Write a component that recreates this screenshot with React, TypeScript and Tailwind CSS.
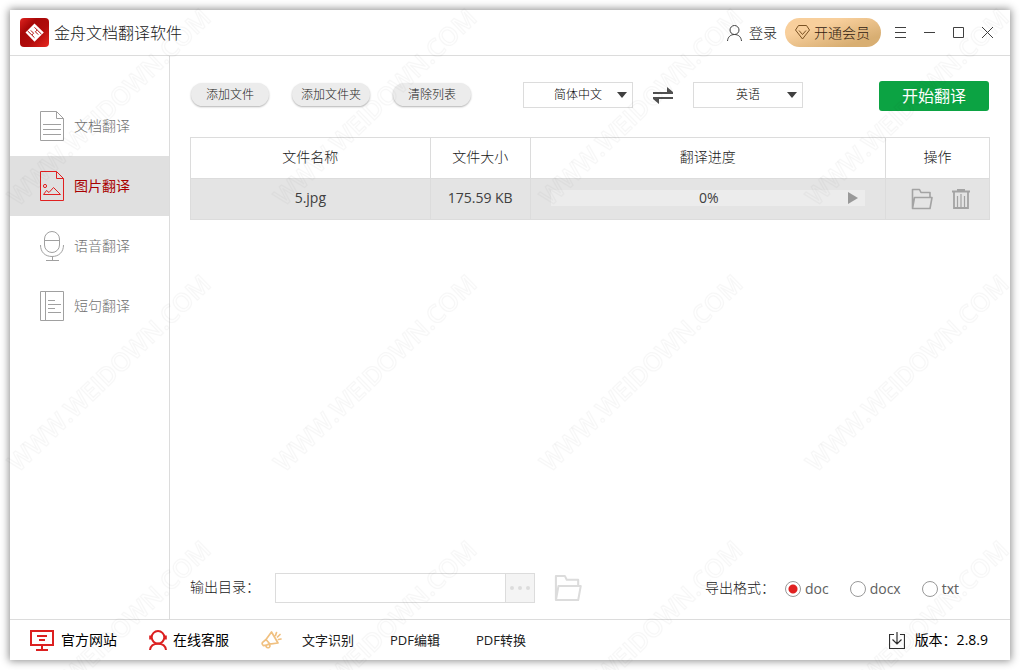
import { useState } from 'react';
import type { ReactNode } from 'react';

function Logo() {
  return (
    <svg width="29" height="29" viewBox="0 0 29 29" aria-hidden="true">
      <defs>
        <linearGradient id="logo-bg" x1="0" y1="0" x2="1" y2="1">
          <stop offset="0" stopColor="#e02420" />
          <stop offset="0.3" stopColor="#a80808" />
          <stop offset="0.6" stopColor="#b00c0c" />
          <stop offset="1" stopColor="#e8281f" />
        </linearGradient>
      </defs>
      <rect width="29" height="29" rx="4" fill="url(#logo-bg)" />
      <path d="M14.5 5.5 23.8 14.5 14.5 23.8 5.5 14.5Z" fill="#fff" />
      <path
        d="M7.5 12.8 11.8 17 13.6 15.2 10.8 12.4M21.5 16.2 17.2 12 15.4 13.8 18.2 16.6M11.8 17 14.5 19.7M17.2 12 14.5 9.3"
        fill="none"
        stroke="#b00c0c"
        strokeWidth="1"
      />
    </svg>
  );
}

function DocIcon() {
  return (
    <svg width="24" height="30" viewBox="0 0 24 30" fill="none" stroke="#a0a0a0" aria-hidden="true">
      <path d="M.5.5H16.5L23.5 7.5V29.5H.5ZM16.5.5V7.5H23.5M3 13.5H21M3 18.5H21M3 23.5H21" />
    </svg>
  );
}

function ImageIcon() {
  return (
    <svg width="24" height="30" viewBox="0 0 24 30" fill="none" stroke="#e02020" aria-hidden="true">
      <path d="M.5.5H16.5L23.5 7.5V29.5H.5ZM16.5.5V7.5H23.5M3.5 23.5 6.5 19.5 9 21.5 13.5 16.5 20.5 23.5Z" />
      <circle cx="5" cy="15" r="1.6" />
    </svg>
  );
}

function MicIcon() {
  return (
    <svg width="24" height="30" viewBox="0 0 24 30" fill="none" stroke="#a0a0a0" aria-hidden="true">
      <rect x="4.5" y=".5" width="15" height="21" rx="7.5" />
      <path d="M4.5 9.5H19.5M.5 14C.5 21 5 25.5 12 25.5S23.5 21 23.5 14M12.5 25.5V29.5M6 29.5H19" />
    </svg>
  );
}

function BookIcon() {
  return (
    <svg width="24" height="30" viewBox="0 0 24 30" fill="none" stroke="#a0a0a0" aria-hidden="true">
      <path d="M.5.5H23.5V29.5H.5ZM5.5.5V29.5M8 9.5H15M8 13.5H21M8 17.5H15M8 21.5H21" />
    </svg>
  );
}

function FolderIcon({ size }: { size: number }) {
  return (
    <svg width={size} height={size} viewBox="0 0 22 22" fill="none" stroke="currentColor" strokeWidth="1.6" strokeLinejoin="round" aria-hidden="true">
      <path d="M1.5 20V1.5H8.5L10 4.5H19V9M1.5 20.5 3.5 9.5H21L19 20.5H1.5V17" />
    </svg>
  );
}

function TrashIcon() {
  return (
    <svg width="18" height="20" viewBox="0 0 18 20" fill="none" stroke="currentColor" aria-hidden="true">
      <path d="M0 2.5H18M2 3V19H16V3" strokeWidth="1.8" />
      <path d="M5 1H13" strokeWidth="2" />
      <path d="M5.5 7V18M9 5V18M12.5 7V18" strokeWidth="1.2" />
    </svg>
  );
}

function Watermark() {
  return (
    <svg className="pointer-events-none absolute inset-0 h-full w-full" aria-hidden="true">
      <defs>
        <pattern id="wm" width="266" height="266" patternUnits="userSpaceOnUse">
          <text
            transform="translate(109 107) rotate(-44)"
            y="9"
            textAnchor="middle"
            fontSize="25"
            fontFamily='"Open Sans", "Noto Sans", sans-serif'
            fontWeight="600"
            fill="none"
            stroke="#000"
            strokeOpacity="0.03"
            strokeWidth="1.2"
          >
            WWW.WEIDOWN.COM
          </text>
        </pattern>
      </defs>
      <rect width="100%" height="100%" fill="url(#wm)" />
    </svg>
  );
}

const navItems: { label: string; icon: ReactNode }[] = [
  { label: '文档翻译', icon: <DocIcon /> },
  { label: '图片翻译', icon: <ImageIcon /> },
  { label: '语音翻译', icon: <MicIcon /> },
  { label: '短句翻译', icon: <BookIcon /> },
];

function LanguageSelect({ label, value, onChange }: { label: string; value: string; onChange: (v: string) => void }) {
  return (
    <div className="relative">
      <select
        aria-label={label}
        value={value}
        onChange={(e) => onChange(e.target.value)}
        className="block h-[26px] w-[110px] appearance-none border border-[#dcdcdc] bg-white px-5 text-center text-xs font-light text-black [text-align-last:center]"
      >
        <option>简体中文</option>
        <option>英语</option>
      </select>
      <svg className="pointer-events-none absolute top-[10px] right-[6px]" width="10" height="6" viewBox="0 0 10 6" aria-hidden="true">
        <path d="M0 0H10L5 6Z" fill="#404040" />
      </svg>
    </div>
  );
}

export default function App() {
  const [active, setActive] = useState('图片翻译');
  const [source, setSource] = useState('简体中文');
  const [target, setTarget] = useState('英语');
  const [format, setFormat] = useState('doc');
  const [outputDir, setOutputDir] = useState('');

  return (
    <div className='relative flex min-h-screen bg-white p-[10px] font-["Open_Sans","Noto_Sans_CJK_SC",sans-serif] text-sm text-[#404040]'>
      <div className="flex flex-1 flex-col bg-white shadow-[0_0_8px_1px_rgba(0,0,0,0.45)]">
        <header className="flex h-[46px] items-center border-b border-[#dcdcdc] pr-[17px] pl-[10px]">
          <Logo />
          <h1 className="ml-[5px] text-base font-light text-[#202020]">金舟文档翻译软件</h1>
          <div className="ml-auto flex items-center">
            <button className="flex items-center gap-[7px] font-light text-[#202020]">
              <svg width="15" height="16" viewBox="0 0 15 16" fill="none" stroke="#404040" aria-hidden="true">
                <circle cx="7.5" cy="5" r="4.5" />
                <path d="M.5 16C.8 12 3.5 9.5 7.5 9.5S14.2 12 14.5 16" />
              </svg>
              登录
            </button>
            <button className="ml-2 flex h-[29px] items-center gap-1 rounded-full bg-linear-to-br from-[#f8cf9c] from-30% to-[#d8ae72] to-80% pr-[11px] pl-[10px] font-light text-[#302010]">
              <svg width="15" height="15" viewBox="0 0 15 15" fill="none" stroke="#7a5223" aria-hidden="true">
                <path d="M3.5.5H11.5L14.5 5 7.5 14 .5 5ZM4 5.5 7.5 9.5 11 5.5" />
              </svg>
              开通会员
            </button>
            <button aria-label="菜单" className="ml-[14px]">
              <svg width="11" height="11" viewBox="0 0 11 11" stroke="#404040" aria-hidden="true"><path d="M0 .5H11M0 5.5H11M0 10.5H11" /></svg>
            </button>
            <button aria-label="最小化" className="ml-[18px]">
              <svg width="11" height="11" viewBox="0 0 11 11" stroke="#404040" aria-hidden="true"><path d="M0 5.5H11" /></svg>
            </button>
            <button aria-label="最大化" className="ml-[18px]">
              <svg width="11" height="11" viewBox="0 0 11 11" fill="none" stroke="#404040" aria-hidden="true"><path d="M.5.5H10.5V10.5H.5Z" /></svg>
            </button>
            <button aria-label="关闭" className="ml-[18px]">
              <svg width="11" height="11" viewBox="0 0 11 11" stroke="#404040" aria-hidden="true"><path d="M0 0 11 11M11 0 0 11" /></svg>
            </button>
          </div>
        </header>

        <div className="flex flex-1">
          <nav className="w-40 shrink-0 border-r border-[#dcdcdc] pt-10">
            {navItems.map((item) => (
              <button
                key={item.label}
                aria-current={active === item.label ? 'page' : undefined}
                onClick={() => setActive(item.label)}
                className={
                  active === item.label
                    ? 'flex h-[60px] w-full items-center gap-[10px] bg-[#e0e0e0] pl-[30px] text-[#a80000]'
                    : 'flex h-[60px] w-full items-center gap-[10px] pl-[30px] font-light text-[#707070]'
                }
              >
                {item.icon}
                {item.label}
              </button>
            ))}
          </nav>

          <main className="flex min-w-0 flex-1 flex-col px-5 pt-[25px] pb-4">
            <div className="flex items-start">
              <div className="flex gap-[23px] pt-[2px] pl-[1px]">
                {['添加文件', '添加文件夹', '清除列表'].map((t) => (
                  <button key={t} className="h-[23px] w-[78px] rounded-full bg-[#ececec] text-xs font-light text-[#202020] shadow-[0_1px_2px_rgba(0,0,0,0.3)]">
                    {t}
                  </button>
                ))}
              </div>
              <div className="ml-[52px] flex items-center gap-5 pt-[1px]">
                <LanguageSelect label="源语言" value={source} onChange={setSource} />
                <button
                  aria-label="交换语言"
                  onClick={() => {
                    setSource(target);
                    setTarget(source);
                  }}
                >
                  <svg width="20" height="17" viewBox="0 0 20 17" fill="#505050" aria-hidden="true">
                    <path d="M0 5H14V0L20 5V7H0ZM0 10H20V12H6V17L0 12Z" />
                  </svg>
                </button>
                <LanguageSelect label="目标语言" value={target} onChange={setTarget} />
              </div>
              <button className="mr-px ml-auto h-[30px] w-[110px] rounded-[3px] bg-[#0ca343] text-base text-white">开始翻译</button>
            </div>

            <table className="mt-[26px] w-full table-fixed border-collapse text-center">
              <colgroup>
                <col className="w-[30%]" />
                <col className="w-[100px]" />
                <col />
                <col className="w-[104px]" />
              </colgroup>
              <thead>
                <tr className="h-[41px]">
                  {['文件名称', '文件大小', '翻译进度', '操作'].map((t) => (
                    <th key={t} scope="col" className="border border-[#dcdcdc] p-0 pb-[2px] font-light text-[#202020]">
                      {t}
                    </th>
                  ))}
                </tr>
              </thead>
              <tbody>
                <tr className="h-[41px] bg-[#e4e4e4]">
                  <td className="border border-[#dcdcdc] p-0 pb-[2px]">5.jpg</td>
                  <td className="border border-[#dcdcdc] p-0 pb-[2px]">175.59 KB</td>
                  <td className="border border-[#dcdcdc] px-5 py-0 pb-[2px]">
                    <div className="grid h-4 grid-cols-[1fr_auto_1fr] items-center bg-[#ececec] pr-[7px] pl-[9px]">
                      <span className="col-start-2 leading-4">0%</span>
                      <button aria-label="开始" className="justify-self-end">
                        <svg width="10" height="12" viewBox="0 0 10 12" aria-hidden="true"><path d="M0 0 10 6 0 12Z" fill="#999" /></svg>
                      </button>
                    </div>
                  </td>
                  <td className="border border-[#dcdcdc] p-0">
                    <div className="flex items-center justify-center gap-[19px] pl-[6px] text-[#a3a3a3]">
                      <button aria-label="打开文件夹"><FolderIcon size={22} /></button>
                      <button aria-label="删除"><TrashIcon /></button>
                    </div>
                  </td>
                </tr>
              </tbody>
            </table>

            <div className="mt-auto flex items-center">
              <label htmlFor="out" className="w-[85px] pb-[2px] font-light text-[#202020]">输出目录：</label>
              <input
                id="out"
                value={outputDir}
                onChange={(e) => setOutputDir(e.target.value)}
                className="h-[30px] w-[231px] border border-[#dcdcdc] bg-white px-2"
              />
              <button aria-label="浏览" className="flex h-[30px] w-[29px] items-center justify-center border border-l-0 border-[#dcdcdc] bg-[#f4f4f4]">
                <svg width="20" height="4" viewBox="0 0 20 4" fill="#dcdcdc" aria-hidden="true">
                  <circle cx="2" cy="2" r="2" /><circle cx="10" cy="2" r="2" /><circle cx="18" cy="2" r="2" />
                </svg>
              </button>
              <button aria-label="打开输出目录" className="ml-[19px] text-[#dcdcdc]"><FolderIcon size={28} /></button>

              <fieldset className="ml-auto pr-[31px]">
                <legend className="float-left mr-[10px] font-light text-[#202020]">导出格式：</legend>
                <div className="flex gap-[21px] pt-[1px]">
                  {['doc', 'docx', 'txt'].map((f) => (
                    <label key={f} className="flex items-center gap-1 text-[#606060]">
                      <input
                        type="radio"
                        name="format"
                        checked={format === f}
                        onChange={() => setFormat(f)}
                        className="h-4 w-4 appearance-none rounded-full border border-[#999999] bg-white checked:bg-[radial-gradient(circle,#e02020_4px,#ffffff_5px)]"
                      />
                      {f}
                    </label>
                  ))}
                </div>
              </fieldset>
            </div>
          </main>
        </div>

        <footer className="flex h-[41px] items-center border-t border-[#dcdcdc] pr-[22px] pl-5 text-black">
          <a href="#site" className="flex items-center gap-[7px]">
            <svg width="24" height="21" viewBox="0 0 24 21" fill="none" stroke="#dc2020" strokeWidth="2" aria-hidden="true">
              <path d="M1 1H23V15H1ZM12 15V20M6 20H18M7 6H17M9 10H15" />
            </svg>
            官方网站
          </a>
          <a href="#service" className="ml-8 flex items-center gap-[6px]">
            <svg width="18" height="21" viewBox="0 0 18 21" fill="none" stroke="#dc2020" strokeWidth="2" aria-hidden="true">
              <circle cx="9" cy="7.3" r="6.3" />
              <path d="M1 20C1.5 16 4.5 13.8 9 13.8S16.5 16 17 20M1.2 5.5V9.5M16.8 5.5V9.5" />
            </svg>
            在线客服
          </a>
          <svg className="ml-8" width="21" height="19" viewBox="0 0 21 19" fill="none" stroke="#f0c080" strokeWidth="1.7" strokeLinejoin="round" strokeLinecap="round" aria-hidden="true">
            <path d="M5 8.5 10.5 1 17 12 8.5 13.2M5 8.5 1.6 11.3Q.4 13 2.4 14.6L5.5 14.2 8.5 12.5ZM5 14.5A2 2 0 1 0 9 15L8 13M14.5 4.5 15.5 1.5M16.5 6 19 3.5M17.5 8.5 20 8" />
          </svg>
          <div className="ml-5 flex gap-9 text-[13px] text-[#202020]">
            <a href="#ocr">文字识别</a>
            <a href="#edit">PDF编辑</a>
            <a href="#convert">PDF转换</a>
          </div>
          <div className="ml-auto flex items-center gap-[10px]">
            <svg width="16" height="17" viewBox="0 0 16 17" fill="none" stroke="#303030" aria-hidden="true">
              <path d="M5 2.5H.5V16.5H15.5V2.5H11M8 0V12M3.5 7.5 8 12 12.5 7.5" strokeWidth="1.2" />
            </svg>
            <span>版本：2.8.9</span>
          </div>
        </footer>
      </div>
      <Watermark />
    </div>
  );
}
